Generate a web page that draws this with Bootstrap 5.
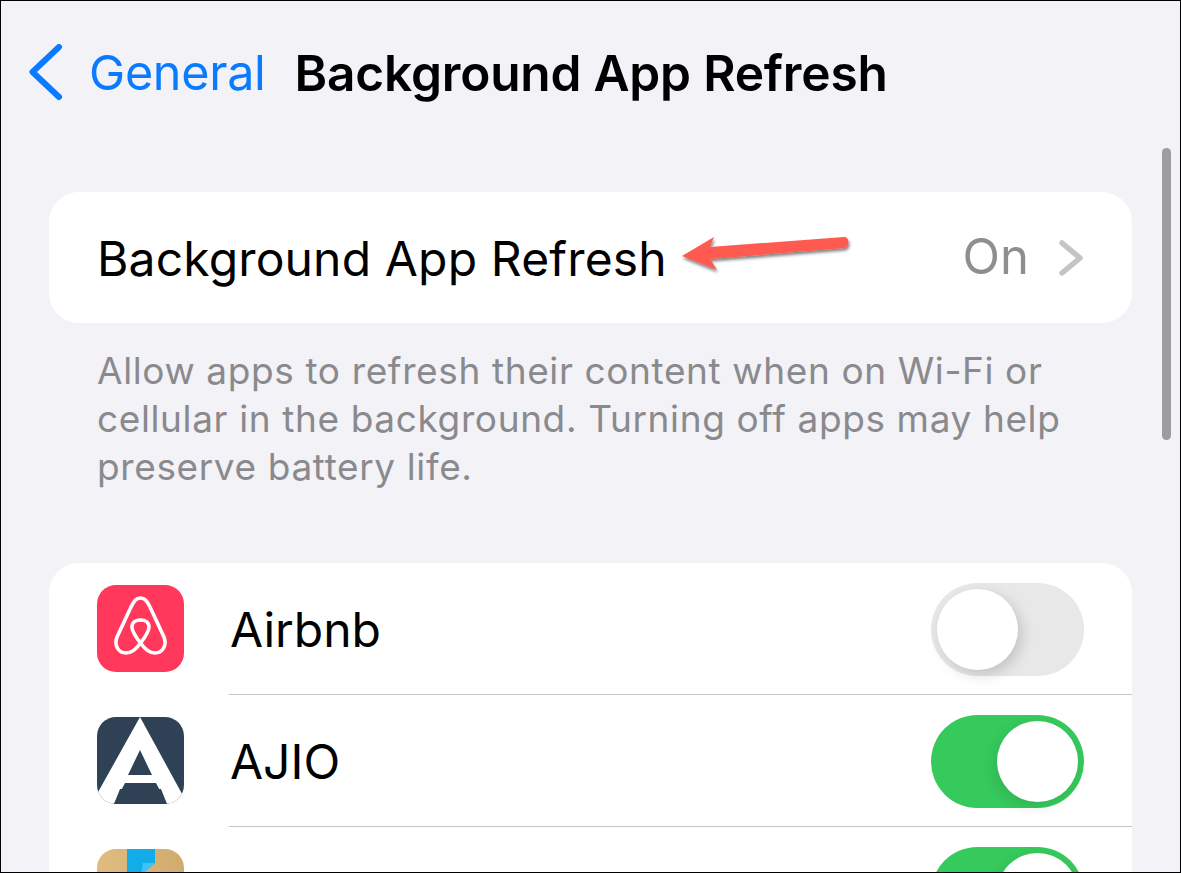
<!DOCTYPE html>
<html lang="en">

<head>
    <meta charset="UTF-8">
    <meta name="viewport" content="width=device-width, initial-scale=1.0">
    <title>Background App Refresh</title>
    <link href="https://cdn.jsdelivr.net/npm/bootstrap@5.3.0/dist/css/bootstrap.min.css" rel="stylesheet">
    <style>
        html, body { height: 100%; overflow: hidden; }
        body { background: #f2f2f7; font-family: Inter, "Liberation Sans", sans-serif; color: #000; }
        .screen { position: relative; height: 873px; overflow: hidden; border: 1px solid #000; padding: 0 48px; }
        .top-bar { height: 146px; padding-top: 42px; margin-left: -20px; }
        .back-chevron { width: 36px; height: 58px; margin-top: 1px; margin-right: 24px; flex: none; }
        .back-label { color: #0a7aff; font-size: 48.5px; line-height: 60px; font-weight: 400; margin-right: 29px; letter-spacing: -0.3px; }
        .page-title { font-size: 49.6px; line-height: 60px; font-weight: 600; margin: 0; letter-spacing: -0.2px; }
        .scroll-thumb { position: absolute; left: 1161px; top: 147px; width: 9px; height: 292px; border-radius: 5px; background: #9d9d9f; }
        .group-box { background: #fff; border-radius: 30px; width: 1083px; }
        .refresh-row { height: 131px; margin-top: 45px; padding: 0 48px; }
        .refresh-label { font-size: 48px; letter-spacing: 0.15px; padding-top: 3px; }
        .refresh-value { font-size: 49px; color: #8e8e8e; margin-right: 29px; margin-top: -1px; }
        .row-chevron { width: 26px; height: 38px; }
        .hint-text { font-size: 37px; letter-spacing: 0.62px; line-height: 48px; color: #8a8a8e; padding: 24px 60px 0 48px; margin: 0 0 72px; width: 1083px; height: 168px; }
        .apps-box { overflow: hidden; }
        .app-row { height: 132px; padding-left: 48px; }
        .app-icon { width: 87px; height: 87px; border-radius: 19px; flex: none; display: block; margin-top: -2px; }
        .app-body { height: 132px; margin-left: 45px; padding-right: 48px; border-bottom: 1px solid #c6c6c8; }
        .app-name { font-size: 48px; padding-top: 3px; padding-left: 1px; }
        .ios-switch { position: relative; width: 153px; height: 93px; border-radius: 47px; flex: none; margin-top: 2px; }
        .ios-switch.is-off { background: #e8e8e9; }
        .ios-switch.is-on { background: #36c95c; }
        .ios-switch::after { content: ""; position: absolute; top: 6px; width: 81px; height: 81px; border-radius: 50%; background: #fff; }
        .ios-switch.is-off::after { left: 6px; box-shadow: 4px 5px 14px rgba(0,0,0,.16); }
        .ios-switch.is-on::after { right: 6px; box-shadow: -3px 5px 14px rgba(0,0,0,.10); }
        .callout-arrow { position: absolute; left: 678px; top: 230px; width: 178px; height: 46px; }
    </style>
</head>

<body>
    <div class="screen">
        <div class="top-bar d-flex align-items-start">
            <svg class="back-chevron" viewBox="0 0 36 58">
                <path d="M30 3 L3.500 28 L30 53" fill="none" stroke="#0a7aff" stroke-width="6" stroke-linecap="round" stroke-linejoin="round"/>
            </svg>
            <span class="back-label">General</span>
            <h1 class="page-title">Background App Refresh</h1>
        </div>

        <div class="group-box refresh-row d-flex align-items-center justify-content-between">
            <span class="refresh-label">Background App Refresh</span>
            <span class="d-flex align-items-center">
                <span class="refresh-value">On</span>
                <svg class="row-chevron" viewBox="0 0 26 38">
                    <path d="M4 4 L22 19 L4 34" fill="none" stroke="#c4c4c6" stroke-width="5.5" stroke-linecap="round" stroke-linejoin="round"/>
                </svg>
            </span>
        </div>

        <p class="hint-text">Allow apps to refresh their content when on Wi-Fi or cellular in the background. Turning off apps may help preserve battery life.</p>

        <div class="group-box apps-box">
            <div class="app-row d-flex align-items-center">
                <svg class="app-icon" viewBox="0 0 87 87">
                    <rect width="87" height="87" fill="#ff385c"/>
                    <path d="M43.500 13 C39 13 37 16 34 22 L20 52 C17 60 21 68 29 68 C35 68 40 63 43.500 58 C47 63 52 68 58 68 C66 68 70 60 67 52 L53 22 C50 16 48 13 43.500 13 Z M43.500 58 C38 51 35 46 35 42 C35 37 39 35 43.500 35 C48 35 52 37 52 42 C52 46 49 51 43.500 58 Z" fill="none" stroke="#fff" stroke-width="3.600" stroke-linejoin="round"/>
                </svg>
                <div class="app-body flex-grow-1 d-flex align-items-center justify-content-between">
                    <span class="app-name">Airbnb</span>
                    <span class="ios-switch is-off"></span>
                </div>
            </div>
            <div class="app-row d-flex align-items-center">
                <svg class="app-icon" viewBox="0 0 87 87">
                    <rect width="87" height="87" fill="#2f4255"/>
                    <path d="M43 0 L84 75 L87 80 L87 87 L70 87 L59 66 L28 66 L17 87 L0 87 L0 77 Z" fill="#fff"/>
                    <path d="M43 33 L55 58 L31 58 Z" fill="#2f4255"/>
                    <path d="M23 72 L64 72 L70 87 L17 87 Z" fill="#2f4255"/>
                </svg>
                <div class="app-body flex-grow-1 d-flex align-items-center justify-content-between">
                    <span class="app-name">AJIO</span>
                    <span class="ios-switch is-on"></span>
                </div>
            </div>
            <div class="app-row d-flex align-items-center">
                <svg class="app-icon" viewBox="0 0 87 87">
                    <defs>
                        <linearGradient id="boxTan" x1="0" x2="1" y1="0" y2="0">
                            <stop offset="0" stop-color="#e0bc80"/>
                            <stop offset="1" stop-color="#d0ab6c"/>
                        </linearGradient>
                    </defs>
                    <rect width="87" height="87" fill="url(#boxTan)"/>
                    <path d="M30 0 H58 V14 L44 26 H30 Z" fill="#12ace8"/>
                    <path d="M44 26 L58 14 H46 Z" fill="#3fc3f8"/>
                </svg>
                <div class="app-body flex-grow-1 d-flex align-items-center justify-content-between">
                    <span class="app-name"></span>
                    <span class="ios-switch is-on"></span>
                </div>
            </div>
        </div>

        <div class="scroll-thumb"></div>

        <svg class="callout-arrow" viewBox="0 0 178 46">
            <defs>
                <filter id="arrowShade" x="-10%" y="-30%" width="120%" height="170%">
                    <feDropShadow dx="1" dy="2.500" stdDeviation="1.500" flood-color="#000" flood-opacity="0.5"/>
                </filter>
            </defs>
            <path d="M3 25 L35 6 L31 16 L165 6 C171 6 171 16 165 17 L31 28 L38 39 Z" fill="#ff5a4f" filter="url(#arrowShade)"/>
        </svg>
    </div>
    <script src="https://cdn.jsdelivr.net/npm/bootstrap@5.3.0/dist/js/bootstrap.bundle.min.js"></script>
</body>

</html>
